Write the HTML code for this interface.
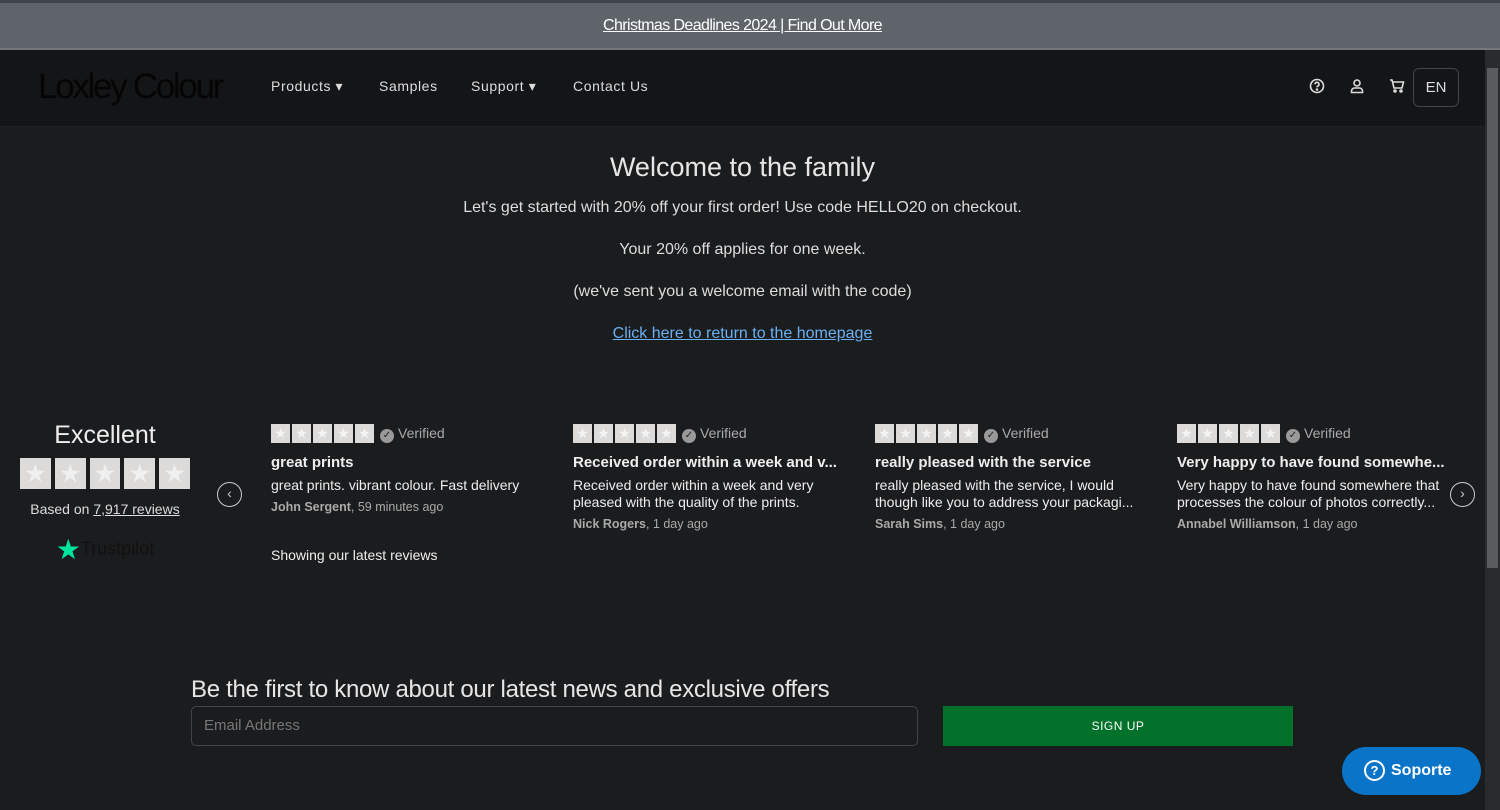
<!DOCTYPE html>
<html><head><meta charset="utf-8"><style>
*{box-sizing:border-box;margin:0;padding:0}
body{width:1500px;height:810px;overflow:hidden;background:#1b1c1e;font-family:"Liberation Sans",sans-serif;color:#ddd;position:relative}
.top{position:absolute;left:0;top:0;width:1500px;height:50px;background:#5f646b;border-top:3px solid #3f434a;border-bottom:2px solid #777}
.top a{position:absolute;left:0;right:15px;top:14px;text-align:center;color:#fff;font-size:16px;letter-spacing:-0.6px;text-decoration:underline}
.nav{position:absolute;left:0;top:50px;width:1485px;height:77px;background:#141517;border-bottom:1px solid #222}
.logo{position:absolute;left:38px;top:17px;font-size:35px;color:#050505;letter-spacing:-2.3px;font-weight:300}
.menu{position:absolute;top:28px;font-size:14px;color:#ddd;letter-spacing:.6px}
.scroll{position:absolute;right:0;top:50px;width:15px;height:760px;background:#2a2b2d}
.scroll i{position:absolute;left:2px;top:18px;width:11px;height:500px;background:#5a5b5d}
.c{position:absolute;left:0;width:1485px;text-align:center;color:#ddd}
.stars{display:inline-flex;gap:2px}
.stars b{width:19px;height:19px;background:#dcdbd9;display:inline-block;color:#f4f4f4;font-size:14px;line-height:19px;text-align:center;font-weight:normal}
.rv{position:absolute;top:424px;width:270px;font-size:14px;color:#eee}
.rv .h{font-weight:bold;font-size:15px;margin-top:11px;white-space:nowrap;overflow:hidden}
.rv .t{margin-top:6px;line-height:17px}
.rv .a{color:#aaa;font-size:12.5px;margin-top:6px}
.ver{color:#aaa;font-size:14px;margin-left:6px;vertical-align:top;position:relative;top:1px}
.ver i{display:inline-block;width:14px;height:14px;border-radius:50%;background:#999;color:#222;font-size:10px;text-align:center;line-height:14px;font-style:normal;margin-right:4px}
.arr{position:absolute;width:25px;height:25px;border:1.5px solid #ccc;border-radius:50%;text-align:center;line-height:21px;font-size:14px;color:#ccc}
</style></head><body>
<div class="top"><a>Christmas Deadlines 2024 | Find Out More </a></div>
<div class="nav">
<div class="logo">Loxley Colour</div>
<div class="menu" style="left:271px">Products ▾</div>
<div class="menu" style="left:379px">Samples</div>
<div class="menu" style="left:471px">Support ▾</div>
<div class="menu" style="left:573px">Contact Us</div>
<svg style="position:absolute;left:1309px;top:28px" width="16" height="16" viewBox="0 0 16 16" fill="none" stroke="#ddd" stroke-width="1.6"><circle cx="8" cy="8" r="6.5"/><path d="M6 6.3a2 2 0 1 1 2.6 1.9c-.5.2-.6.6-.6 1.2"/><circle cx="8" cy="11.5" r=".5" fill="#ddd"/></svg>
<svg style="position:absolute;left:1349px;top:28px" width="16" height="16" viewBox="0 0 16 16" fill="none" stroke="#ddd" stroke-width="1.6"><circle cx="8" cy="5" r="3"/><path d="M2.5 14.5v-1.5a3 3 0 0 1 3-3h5a3 3 0 0 1 3 3v1.5z"/></svg>
<svg style="position:absolute;left:1389px;top:28px" width="16" height="16" viewBox="0 0 16 16" fill="none" stroke="#ddd" stroke-width="1.6"><path d="M1 2h2l2 8h8l1.5-6H4"/><circle cx="6" cy="13" r="1"/><circle cx="12" cy="13" r="1"/></svg>
<div style="position:absolute;left:1413px;top:18px;width:46px;height:39px;border:1px solid #444;border-radius:6px;text-align:center;line-height:37px;font-size:15px;color:#ddd">EN</div>
</div>
<div class="scroll"><i></i></div>
<div class="c" style="top:152px;font-size:27px;font-weight:300;color:#e6e6e6">Welcome to the family</div>
<div class="c" style="top:199px;font-size:16px">Let's get started with 20% off your first order! Use code HELLO20 on checkout.</div>
<div class="c" style="top:241px;font-size:16px">Your 20% off applies for one week.</div>
<div class="c" style="top:283px;font-size:16px">(we've sent you a welcome email with the code)</div>
<div class="c" style="top:325px;font-size:16px;color:#6ab0f3;text-decoration:underline">Click here to return to the homepage</div>

<div style="position:absolute;left:20px;top:421px;width:170px;text-align:center">
<div style="font-size:25px;color:#eee">Excellent</div>
<div style="margin-top:8px;display:flex;gap:4px;justify-content:center"><b style="width:31px;height:31px;background:#dcdbd9;color:#f0f0f0;font-size:22px;line-height:31px">★</b><b style="width:31px;height:31px;background:#dcdbd9;color:#f0f0f0;font-size:22px;line-height:31px">★</b><b style="width:31px;height:31px;background:#dcdbd9;color:#f0f0f0;font-size:22px;line-height:31px">★</b><b style="width:31px;height:31px;background:#dcdbd9;color:#f0f0f0;font-size:22px;line-height:31px">★</b><b style="width:31px;height:31px;background:#dcdbd9;color:#f0f0f0;font-size:22px;line-height:31px">★</b></div>
<div style="font-size:14px;margin-top:12px;color:#ddd">Based on <u>7,917 reviews</u></div>
<div style="margin-top:16px;font-size:18px;color:#111"><span style="color:#00e59b;font-size:28px;vertical-align:middle">★</span>Trustpilot</div>
</div>
<div class="arr" style="left:217px;top:482px">‹</div>
<div class="arr" style="left:1450px;top:482px">›</div>

<div class="rv" style="left:271px"><span class="stars"><b>★</b><b>★</b><b>★</b><b>★</b><b>★</b></span><span class="ver"><i>✓</i>Verified</span>
<div class="h">great prints</div><div class="t">great prints. vibrant colour. Fast delivery</div><div class="a"><b>John Sergent</b>, 59 minutes ago</div>
<div style="margin-top:33px">Showing our latest reviews</div></div>
<div class="rv" style="left:573px"><span class="stars"><b>★</b><b>★</b><b>★</b><b>★</b><b>★</b></span><span class="ver"><i>✓</i>Verified</span>
<div class="h">Received order within a week and v...</div><div class="t">Received order within a week and very<br>pleased with the quality of the prints.</div><div class="a"><b>Nick Rogers</b>, 1 day ago</div></div>
<div class="rv" style="left:875px"><span class="stars"><b>★</b><b>★</b><b>★</b><b>★</b><b>★</b></span><span class="ver"><i>✓</i>Verified</span>
<div class="h">really pleased with the service</div><div class="t">really pleased with the service, I would<br>though like you to address your packagi...</div><div class="a"><b>Sarah Sims</b>, 1 day ago</div></div>
<div class="rv" style="left:1177px"><span class="stars"><b>★</b><b>★</b><b>★</b><b>★</b><b>★</b></span><span class="ver"><i>✓</i>Verified</span>
<div class="h">Very happy to have found somewhe...</div><div class="t">Very happy to have found somewhere that<br>processes the colour of photos correctly...</div><div class="a"><b>Annabel Williamson</b>, 1 day ago</div></div>

<div style="position:absolute;left:191px;top:676px;font-size:24px;font-weight:300;color:#e6e6e6;letter-spacing:-0.3px">Be the first to know about our latest news and exclusive offers</div>
<div style="position:absolute;left:191px;top:706px;width:727px;height:40px;border:1px solid #444;border-radius:5px;font-size:15px;color:#777;padding:10px 12px">Email Address</div>
<div style="position:absolute;left:943px;top:706px;width:350px;height:40px;background:#02722a;color:#fff;font-size:12px;text-align:center;line-height:40px;letter-spacing:.5px">SIGN UP</div>
<div style="position:absolute;left:1342px;top:747px;width:139px;height:48px;background:#0a74c9;border-radius:24px;color:#fff;font-weight:bold;font-size:16px;line-height:48px;padding-left:22px"><span style="display:inline-block;width:21px;height:21px;border:2px solid #fff;border-radius:50%;font-size:13px;line-height:17px;text-align:center;vertical-align:middle;margin-right:6px">?</span>Soporte</div>
</body></html>
